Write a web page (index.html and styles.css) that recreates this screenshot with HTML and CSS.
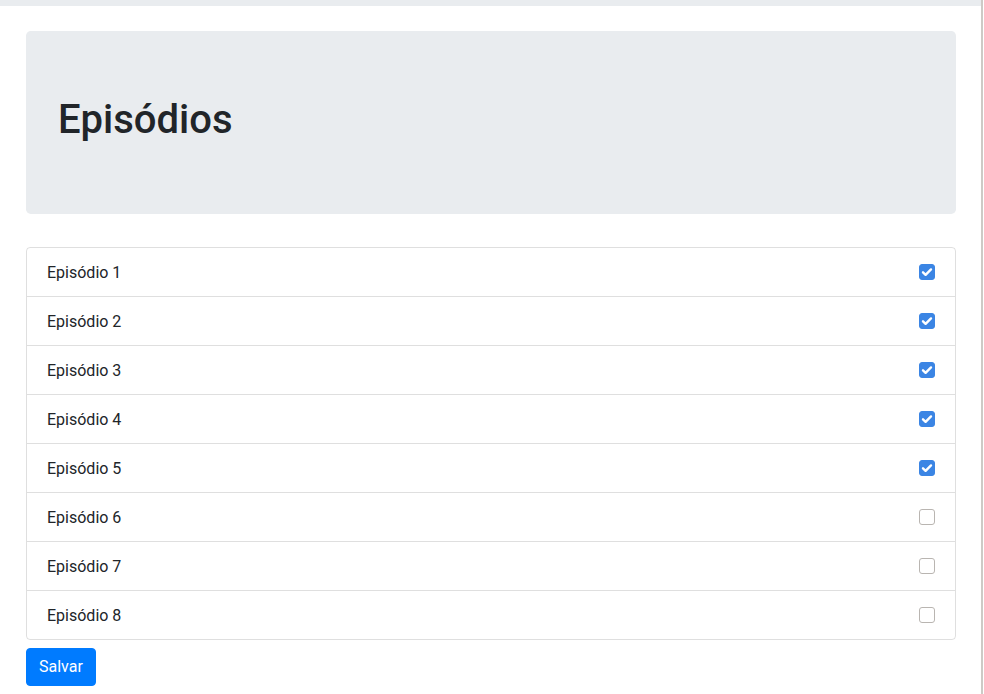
FILE: index.html
```html
<!DOCTYPE html>
<html lang="pt">
<head>
<meta charset="utf-8">
<title>Episódios</title>
<link rel="stylesheet" href="styles.css">
</head>
<body>
<div class="page">
  <div class="topbar"></div>
  <main class="container">
    <section class="jumbotron">
      <h1>Episódios</h1>
    </section>
    <ul class="list-group">
      <li class="list-item"><span>Episódio 1</span><span class="check checked"><svg viewBox="0 0 16 16"><path d="M4 8.3l2.6 2.5L12 5.4"/></svg></span></li>
      <li class="list-item"><span>Episódio 2</span><span class="check checked"><svg viewBox="0 0 16 16"><path d="M4 8.3l2.6 2.5L12 5.4"/></svg></span></li>
      <li class="list-item"><span>Episódio 3</span><span class="check checked"><svg viewBox="0 0 16 16"><path d="M4 8.3l2.6 2.5L12 5.4"/></svg></span></li>
      <li class="list-item"><span>Episódio 4</span><span class="check checked"><svg viewBox="0 0 16 16"><path d="M4 8.3l2.6 2.5L12 5.4"/></svg></span></li>
      <li class="list-item"><span>Episódio 5</span><span class="check checked"><svg viewBox="0 0 16 16"><path d="M4 8.3l2.6 2.5L12 5.4"/></svg></span></li>
      <li class="list-item"><span>Episódio 6</span><span class="check"></span></li>
      <li class="list-item"><span>Episódio 7</span><span class="check"></span></li>
      <li class="list-item"><span>Episódio 8</span><span class="check"></span></li>
    </ul>
    <button class="btn">Salvar</button>
  </main>
</div>
</body>
</html>
```
FILE: styles.css
```css
html, body {
  margin: 0;
  padding: 0;
  background: #fff;
}
body {
  font-family: Roboto, "Liberation Sans", sans-serif;
  font-size: 16px;
  line-height: 1.5;
  color: #212529;
}
.page {
  width: 981px;
  min-height: 694px;
  border-right: 2px solid #cdcac6;
  box-sizing: content-box;
}
.topbar {
  height: 6px;
  background: #e9ecef;
}
.container {
  width: 930px;
  margin-left: 26px;
  padding-top: 25px;
}
.jumbotron {
  background: #e9ecef;
  border-radius: 4.8px;
  padding: 65px 32px 63px;
  margin-bottom: 33px;
  height: 55px;
}
.jumbotron h1 {
  margin: 0;
  font-size: 40px;
  font-weight: 500;
  line-height: 1.2;
}
.list-group {
  list-style: none;
  margin: 0;
  padding: 0;
  border: 1px solid rgba(0,0,0,.125);
  border-radius: 4px;
}
.list-item {
  display: flex;
  align-items: center;
  justify-content: space-between;
  padding: 13px 20px 11px;
  border-top: 1px solid rgba(0,0,0,.125);
}
.list-item:first-child {
  border-top: none;
}
.check {
  width: 16px;
  height: 16px;
  box-sizing: border-box;
  border: 1px solid #b9b5b1;
  border-radius: 3px;
  background: #fff;
  display: block;
  margin-top: -2px;
}
.check.checked {
  background: #3b85e4;
  border-color: #3b85e4;
}
.check svg {
  display: block;
  width: 16px;
  height: 16px;
  margin: -1px;
}
.check svg path {
  fill: none;
  stroke: #fff;
  stroke-width: 2.4;
  stroke-linecap: round;
  stroke-linejoin: round;
}
.btn {
  margin-top: 8px;
  font-family: inherit;
  font-size: 16px;
  line-height: 1.5;
  color: #fff;
  background: #007bff;
  border: 1px solid #007bff;
  border-radius: 4px;
  padding: 6px 12px;
  cursor: pointer;
}
```
